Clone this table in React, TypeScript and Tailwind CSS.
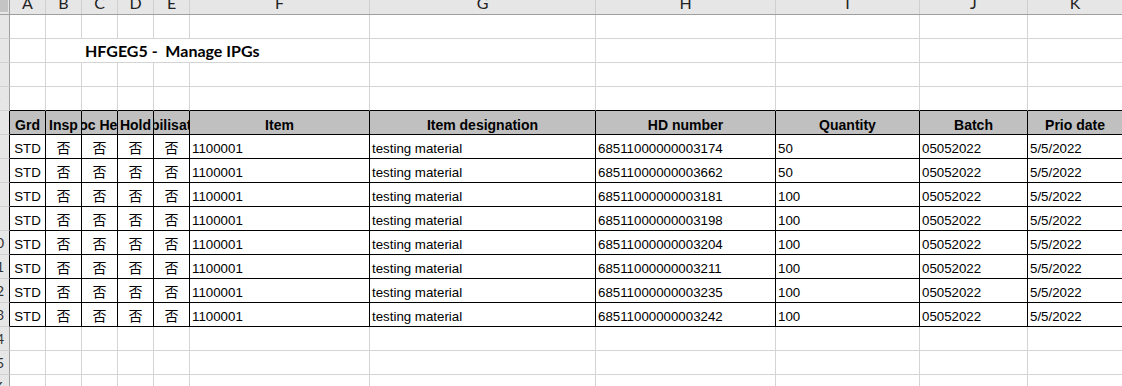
import React from "react";

type Col = {
  key: string;
  w: string;
  head: string;
  center?: boolean;
};

const cols: Col[] = [
  { key: "A", w: "w-[36px]", head: "Grd", center: true },
  { key: "B", w: "w-[36px]", head: "Insp", center: true },
  { key: "C", w: "w-[36px]", head: "Doc Held", center: true },
  { key: "D", w: "w-[36px]", head: "Hold", center: true },
  { key: "E", w: "w-[36px]", head: "Mobilisation", center: true },
  { key: "F", w: "w-[180px]", head: "Item" },
  { key: "G", w: "w-[226px]", head: "Item designation" },
  { key: "H", w: "w-[180px]", head: "HD number" },
  { key: "I", w: "w-[144px]", head: "Quantity" },
  { key: "J", w: "w-[108px]", head: "Batch" },
  { key: "K", w: "w-[95px]", head: "Prio date" },
];

const data = [
  ["68511000000003174", "50"],
  ["68511000000003662", "50"],
  ["68511000000003181", "100"],
  ["68511000000003198", "100"],
  ["68511000000003204", "100"],
  ["68511000000003211", "100"],
  ["68511000000003235", "100"],
  ["68511000000003242", "100"],
];

const arial = "font-['Liberation_Sans',Arial,sans-serif]";

// row numbers sit in a wider column scrolled off to the left; only the tail shows
const RowNum = ({ n, dark }: { n: number; dark?: boolean }) => (
  <div
    className={`w-[10px] h-full shrink-0 overflow-hidden bg-[#e6e6e6] border-r border-b border-b-[#d0d0d0] ${
      dark ? "border-r-black" : "border-r-[#9f9f9f]"
    }`}
  >
    <div className="w-[28px] -ml-[18px] h-full flex items-end justify-center pb-[3px] text-[14px] leading-[16px] text-[#333] font-['Lato',sans-serif]">
      {n}
    </div>
  </div>
);

const EmptyRow = ({ n, tableTop }: { n: number; tableTop?: boolean }) => (
  <div className="flex h-[24px]">
    <RowNum n={n} />
    {cols.map((c) => (
      <div
        key={c.key}
        className={`${c.w} h-full shrink-0 border-r border-b border-r-[#d4d4d4] ${
          tableTop ? "border-b-black" : "border-b-[#d4d4d4]"
        }`}
      />
    ))}
  </div>
);

const TitleRow = () => (
  <div className="flex h-[24px]">
    <RowNum n={2} />
    {cols.map((c) => {
      const open = ["B", "C", "D", "E"].includes(c.key);
      return (
        <div
          key={c.key}
          className={`${c.w} h-full shrink-0 border-b border-b-[#d4d4d4] ${
            open ? "" : "border-r border-r-[#d4d4d4]"
          } ${c.key === "B" ? "relative" : ""}`}
        >
          {c.key === "B" && (
            <span className="absolute left-[39px] bottom-[1px] whitespace-pre text-[16px] leading-[20px] font-bold text-black font-['Lato',sans-serif]">
              HFGEG5 -  Manage IPGs
            </span>
          )}
        </div>
      );
    })}
  </div>
);

const HeadRow = () => (
  <div className="flex h-[24px]">
    <RowNum n={5} dark />
    {cols.map((c) => (
      <div
        key={c.key}
        className={`${c.w} h-full shrink-0 overflow-hidden bg-[#c0c0c0] border-r border-b border-black flex items-end justify-center pb-[1px]`}
      >
        <span className={`whitespace-nowrap text-[14px] leading-[16px] font-bold text-black ${arial}`}>
          {c.head}
        </span>
      </div>
    ))}
  </div>
);

const DataRow = ({ n, hd, qty }: { n: number; hd: string; qty: string }) => {
  const vals: Record<string, string> = {
    A: "STD",
    F: "1100001",
    G: "testing material",
    H: hd,
    I: qty,
    J: "05052022",
    K: "5/5/2022",
  };
  return (
    <div className="flex h-[24px]">
      <RowNum n={n} dark />
      {cols.map((c) => {
        const cjk = ["B", "C", "D", "E"].includes(c.key);
        return (
          <div
            key={c.key}
            className={`${c.w} h-full shrink-0 overflow-hidden border-r border-b border-black flex items-end ${
              c.center ? "justify-center" : "justify-start pl-[2px]"
            }`}
          >
            {cjk ? (
              <span className="text-[14px] leading-[18px] pb-[2px] text-black font-['Noto_Sans_CJK_SC',sans-serif]">
                否
              </span>
            ) : (
              <span className={`whitespace-nowrap text-[13.3px] leading-[15px] pb-[2px] text-black ${arial}`}>
                {vals[c.key]}
              </span>
            )}
          </div>
        );
      })}
    </div>
  );
};

export default function App() {
  return (
    <div className="w-[1122px] h-[386px] overflow-hidden bg-white">
      <div className="flex h-[15px] bg-[#e6e6e6] border-b border-[#9f9f9f]">
        <div className="w-[10px] h-full shrink-0 border-r border-[#9f9f9f] flex items-start">
          <div className="w-[8px] h-[12px] bg-[#c4c4c4]" />
        </div>
        {cols.map((c) => (
          <div
            key={c.key}
            className={`${c.w} h-full shrink-0 border-r border-[#cfcfcf] flex items-start justify-center overflow-hidden`}
          >
            <span className="text-[16px] leading-[6px] text-[#222] font-['Lato',sans-serif]">{c.key}</span>
          </div>
        ))}
      </div>
      <EmptyRow n={1} />
      <TitleRow />
      <EmptyRow n={3} />
      <EmptyRow n={4} tableTop />
      <HeadRow />
      {data.map((d, i) => (
        <DataRow key={i} n={6 + i} hd={d[0]} qty={d[1]} />
      ))}
      <EmptyRow n={14} />
      <EmptyRow n={15} />
      <EmptyRow n={16} />
    </div>
  );
}
